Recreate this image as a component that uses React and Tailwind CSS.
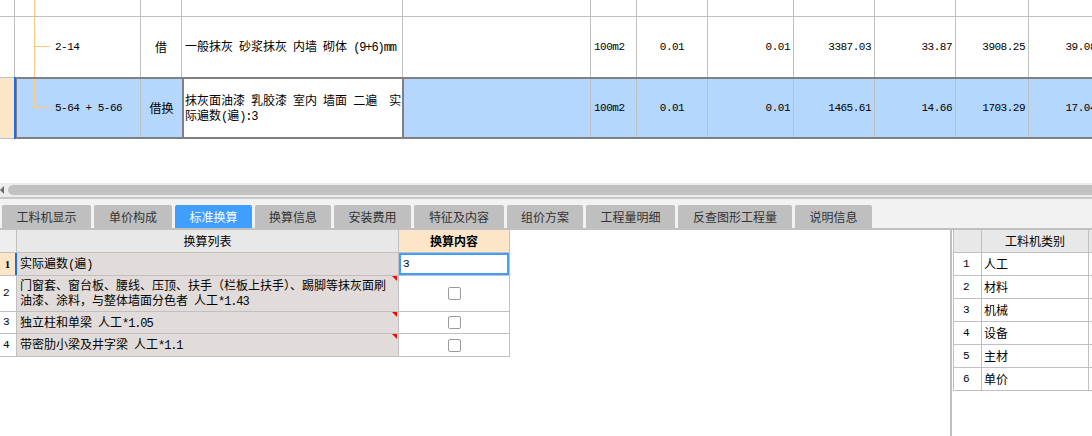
import React from 'react'

const cjk = "font-['Noto_Sans_CJK_SC',sans-serif]"
const mono = "font-['Liberation_Mono','Noto_Sans_CJK_SC',monospace] text-[11px] tracking-[-0.5px]"
const monoInline = "font-['Liberation_Mono',monospace] text-[12px] tracking-[-1.1px]"

const Cell = ({className = '', children}) => (
  <div className={`shrink-0 h-full border-r border-[#c0c0c0] flex items-center overflow-hidden ${className}`}>
    {children}
  </div>
)

const TreeLine = ({to, branch}) => (
  <>
    <div className={`absolute left-[19px] top-0 w-px bg-[#ffc87a] ${to}`} />
    {branch && <div className={`absolute left-[19px] w-[16px] h-px bg-[#ffc87a] ${branch}`} />}
  </>
)

const Tab = ({label, w, active}) => (
  <div
    className={`shrink-0 h-[23px] rounded-t-[2px] flex items-center justify-center text-[12px] ${w} ${
      active ? 'bg-[#409eff] text-white' : 'bg-[#bfbfbf] text-[#333]'
    }`}
  >
    {label}
  </div>
)

const Check = () => (
  <div className="w-[13px] h-[13px] border border-[#9a9a9a] rounded-[2px] bg-white" />
)

const RedMark = () => (
  <div className="absolute right-[1px] top-0 w-0 h-0 border-l-[5px] border-l-transparent border-t-[5px] border-t-[#ff0000]" />
)

const tabs = [
  ['工料机显示', 'w-[89px]'],
  ['单价构成', 'w-[78px]'],
  ['标准换算', 'w-[77px]'],
  ['换算信息', 'w-[76px]'],
  ['安装费用', 'w-[77px]'],
  ['特征及内容', 'w-[90px]'],
  ['组价方案', 'w-[76px]'],
  ['工程量明细', 'w-[89px]'],
  ['反查图形工程量', 'w-[114px]'],
  ['说明信息', 'w-[77px]'],
]

const types = ['人工', '材料', '机械', '设备', '主材', '单价']

export default function App() {
  return (
    <div className={`w-[1092px] h-[436px] overflow-hidden bg-white text-black ${cjk}`}>
      {/* top quota table */}
      <div className="w-[1100px]">
        <div className="flex h-[17px] border-b border-[#c0c0c0]">
          <Cell className="w-[15px]" />
          <Cell className="w-[126px] relative">
            <TreeLine to="h-full" />
          </Cell>
          <Cell className="w-[41px]" />
          <Cell className="w-[221px]" />
          <Cell className="w-[188px]" />
          <Cell className="w-[46px]" />
          <Cell className="w-[71px]" />
          <Cell className="w-[86px]" />
          <Cell className="w-[81px]" />
          <Cell className="w-[81px]" />
          <Cell className="w-[73px]" />
          <Cell className="w-[71px]" />
        </div>

        <div className="flex h-[60px] text-[12px]">
          <Cell className="w-[15px]" />
          <Cell className="w-[126px] relative">
            <TreeLine to="h-full" branch="top-[29px]" />
            <span className={`pl-[40px] ${mono}`}>2-14</span>
          </Cell>
          <Cell className="w-[41px] justify-center">借</Cell>
          <Cell className="w-[221px] pl-[3px] whitespace-nowrap">
            <span>
              一般抹灰{'\u2002'}砂浆抹灰{'\u2002'}内墙{'\u2002'}砌体{'\u2002'}
              <span className={monoInline}>(9+6)mm</span>
            </span>
          </Cell>
          <Cell className="w-[188px]" />
          <Cell className={`w-[46px] pl-[3px] ${mono}`}>100m2</Cell>
          <Cell className={`w-[71px] justify-center ${mono}`}>0.01</Cell>
          <Cell className={`w-[86px] justify-end pr-[3px] ${mono}`}>0.01</Cell>
          <Cell className={`w-[81px] justify-end pr-[3px] ${mono}`}>3387.03</Cell>
          <Cell className={`w-[81px] justify-end pr-[3px] ${mono}`}>33.87</Cell>
          <Cell className={`w-[73px] justify-end pr-[3px] ${mono}`}>3908.25</Cell>
          <Cell className={`w-[71px] justify-end pr-[3px] ${mono}`}>39.08</Cell>
        </div>

        <div className="flex h-[62px] text-[12px]">
          <div className="w-[14px] h-full bg-[#fde6c8] border-t border-b border-[#c0c0c0]" />
          <div className="w-[2px] h-full bg-[#1a6cf5]" />
          <div className="flex h-full bg-[#b5d6fd] border-y-2 border-l border-[#808080]">
            <Cell className="w-[124px] relative">
              <div className="absolute left-[17px] -top-[2px] w-px h-[31px] bg-[#ffc87a]" />
              <div className="absolute left-[17px] top-[28px] w-[16px] h-px bg-[#ffc87a]" />
              <span className={`pl-[38px] whitespace-pre ${mono}`}>5-64 + 5-66</span>
            </Cell>
            <div className="shrink-0 w-[41px] h-full flex items-center justify-center">借换</div>
            <div className="shrink-0 w-[222px] h-[calc(100%+4px)] -my-[2px] border-2 border-[#808080] bg-white flex flex-col justify-center pl-[1px] leading-[15px] whitespace-nowrap">
              <span>抹灰面油漆{'\u2002'}乳胶漆{'\u2002'}室内{'\u2002'}墙面{'\u2002'}二遍{'\u2002\u2002'}实</span>
              <span>际遍数<span className={monoInline}>(</span>遍<span className={monoInline}>):3</span></span>
            </div>
            <Cell className="w-[187px]" />
            <Cell className={`w-[46px] pl-[3px] ${mono}`}>100m2</Cell>
            <Cell className={`w-[71px] justify-center ${mono}`}>0.01</Cell>
            <Cell className={`w-[86px] justify-end pr-[3px] ${mono}`}>0.01</Cell>
            <Cell className={`w-[81px] justify-end pr-[3px] ${mono}`}>1465.61</Cell>
            <Cell className={`w-[81px] justify-end pr-[3px] ${mono}`}>14.66</Cell>
            <Cell className={`w-[73px] justify-end pr-[3px] ${mono}`}>1703.29</Cell>
            <Cell className={`w-[71px] justify-end pr-[3px] ${mono}`}>17.04</Cell>
          </div>
        </div>
      </div>

      {/* blank area + horizontal scrollbar */}
      <div className="h-[44px]" />
      <div className="h-[14px] bg-[#ececec] flex items-center">
        <svg width="4" height="8" viewBox="0 0 4 8" className="shrink-0">
          <path d="M4 0 L0 4 L4 8 Z" fill="#6b6b6b" />
        </svg>
        <div className="ml-[4px] flex-1 h-[10px] rounded-l-full bg-[#c1c1c1]" />
      </div>
      <div className="h-[2px] bg-[#c6c6c6]" />

      {/* tabs */}
      <div className="h-[29px] bg-[#f2f2f2] flex items-end gap-[3px] pl-[2px]">
        {tabs.map(([label, w]) => (
          <Tab key={label} label={label} w={w} active={label === '标准换算'} />
        ))}
      </div>
      <div className="h-[2px] bg-[#c0c0c0]" />

      {/* bottom panels */}
      <div className="flex h-[206px]">
        <div className="w-[510px] shrink-0 text-[12px]">
          <div className="flex h-[23px] border-b border-r border-[#c0c0c0]">
            <div className="w-[17px] h-full bg-[#eeeeee] border-r border-[#c0c0c0]" />
            <div className="w-[382px] h-full bg-[#e8e8e8] border-r border-[#c0c0c0] flex items-center justify-center">换算列表</div>
            <div className="flex-1 h-full bg-[#fde6c8] flex items-center justify-center font-bold">换算内容</div>
          </div>

          <div className="flex h-[23px] border-b border-r border-[#c0c0c0]">
            <div className="w-[15px] h-full bg-[#fde6c8] flex items-center justify-center font-bold text-[11px] font-['Liberation_Serif',serif]">1</div>
            <div className="w-[2px] h-full bg-[#1a6cf5]" />
            <div className="w-[382px] h-full bg-[#e1dcd9] border-r border-[#c0c0c0] flex items-center pl-[3px]">
              <span>实际遍数<span className={monoInline}>(</span>遍<span className={monoInline}>)</span></span>
            </div>
            <div className="flex-1 h-full">
              <div className={`h-full border-2 border-[#409eff] bg-white flex items-center pl-[2px] ${mono}`}>3</div>
            </div>
          </div>

          <div className="flex h-[36px] border-b border-r border-[#c0c0c0]">
            <div className={`w-[17px] h-full border-r border-[#c0c0c0] flex items-center pl-[3px] ${mono}`}>2</div>
            <div className="relative w-[382px] h-full bg-[#e1dcd9] border-r border-[#c0c0c0] flex flex-col justify-center pl-[3px] leading-[15px] whitespace-nowrap">
              <RedMark />
              <span>门窗套、窗台板、腰线、压顶、扶手（栏板上扶手）、踢脚等抹灰面刷</span>
              <span>油漆、涂料，与整体墙面分色者{'\u2002'}人工<span className={monoInline}>*1.43</span></span>
            </div>
            <div className="flex-1 h-full flex items-center justify-center"><Check /></div>
          </div>

          <div className="flex h-[22px] border-b border-r border-[#c0c0c0]">
            <div className={`w-[17px] h-full border-r border-[#c0c0c0] flex items-center pl-[3px] ${mono}`}>3</div>
            <div className="relative w-[382px] h-full bg-[#e1dcd9] border-r border-[#c0c0c0] flex items-center pl-[3px]">
              <RedMark />
              <span>独立柱和单梁{'\u2002'}人工<span className={monoInline}>*1.05</span></span>
            </div>
            <div className="flex-1 h-full flex items-center justify-center"><Check /></div>
          </div>

          <div className="flex h-[23px] border-b border-r border-[#c0c0c0]">
            <div className={`w-[17px] h-full border-r border-[#c0c0c0] flex items-center pl-[3px] ${mono}`}>4</div>
            <div className="relative w-[382px] h-full bg-[#e1dcd9] border-r border-[#c0c0c0] flex items-center pl-[3px]">
              <RedMark />
              <span>带密肋小梁及井字梁{'\u2002'}人工<span className={monoInline}>*1.1</span></span>
            </div>
            <div className="flex-1 h-full flex items-center justify-center"><Check /></div>
          </div>
        </div>

        <div className="flex-1" />

        <div className="w-[142px] shrink-0 border-l-2 border-[#c0c0c0] pl-[1px] text-[12px]">
          <div className="w-[150px] border-l border-[#c0c0c0]">
            <div className="flex h-[23px] bg-[#e8e8e8] border-b border-[#c0c0c0]">
              <div className="w-[28px] h-full border-r border-[#c0c0c0]" />
              <div className="w-[107px] h-full border-r border-[#c0c0c0] flex items-center justify-center">工料机类别</div>
              <div className="flex-1" />
            </div>
            {types.map((t, i) => (
              <div key={t} className="flex h-[23px] border-b border-[#c0c0c0]">
                <div className={`w-[28px] h-full border-r border-[#c0c0c0] flex items-center pl-[9px] ${mono}`}>{i + 1}</div>
                <div className="w-[107px] h-full border-r border-[#c0c0c0] flex items-center pl-[2px]">{t}</div>
                <div className="flex-1" />
              </div>
            ))}
          </div>
        </div>
      </div>
    </div>
  )
}
